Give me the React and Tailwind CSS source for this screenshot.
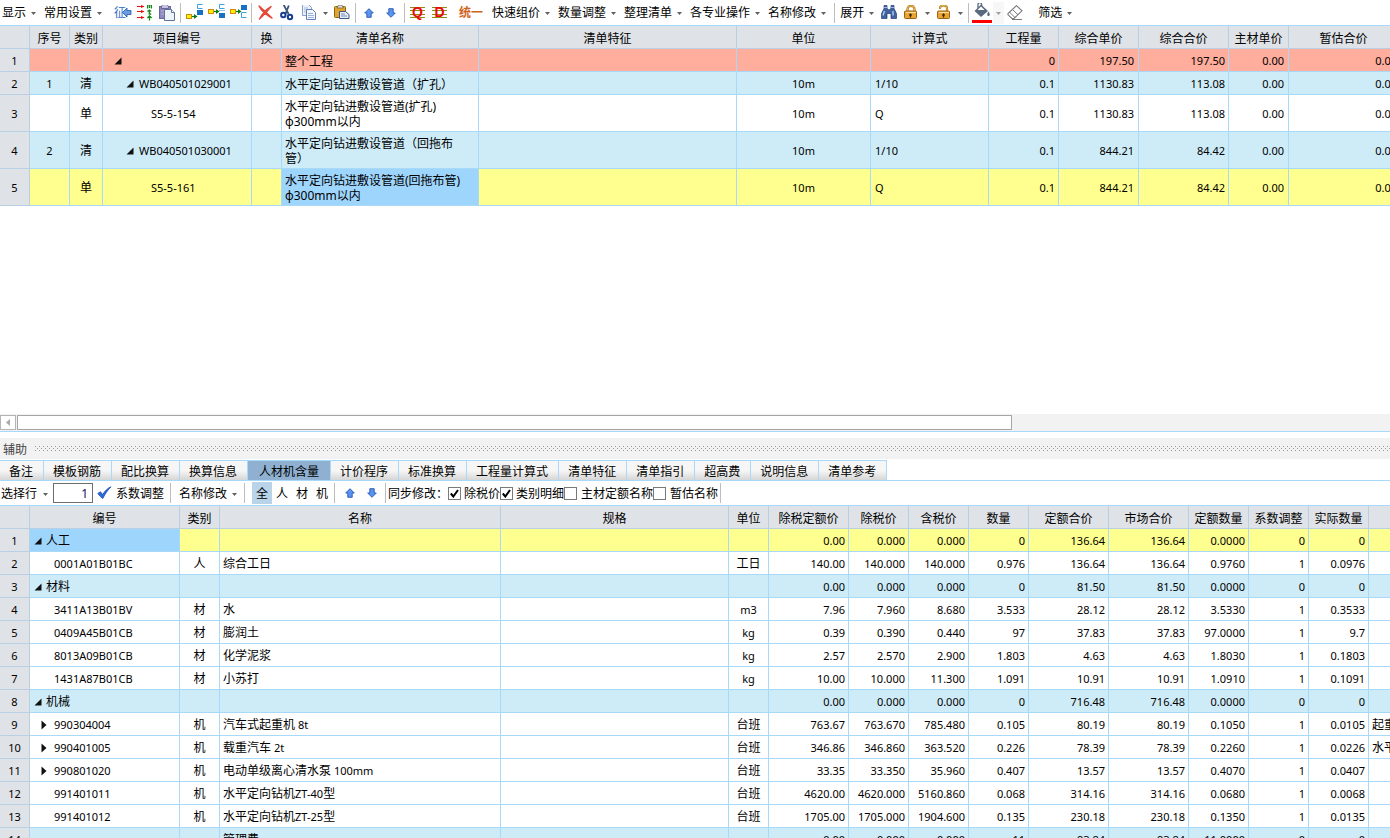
import React from 'react';
import clsx from 'clsx';

/* ---------- data ---------- */

const topColumns = [
  { label: '', width: 'w-[30px]' },
  { label: '序号', width: 'w-[40px]' },
  { label: '类别', width: 'w-[33px]' },
  { label: '项目编号', width: 'w-[149px]' },
  { label: '换', width: 'w-[30px]' },
  { label: '清单名称', width: 'w-[197px]' },
  { label: '清单特征', width: 'w-[258px]' },
  { label: '单位', width: 'w-[134px]' },
  { label: '计算式', width: 'w-[118px]' },
  { label: '工程量', width: 'w-[70px]' },
  { label: '综合单价', width: 'w-[80px]' },
  { label: '综合合价', width: 'w-[90px]' },
  { label: '主材单价', width: 'w-[60px]' },
  { label: '暂估合价', width: 'w-[110px]' },
];

const topRows = [
  { tone: 'total', seq: '', kind: '', code: '', level: 0, name: ['整个工程'], unit: '', formula: '', qty: '0', price: '197.50', total: '197.50' },
  { tone: 'group', seq: '1', kind: '清', code: 'WB040501029001', level: 1, name: ['水平定向钻进敷设管道（扩孔）'], unit: '10m', formula: '1/10', qty: '0.1', price: '1130.83', total: '113.08' },
  { tone: 'plain', seq: '', kind: '单', code: 'S5-5-154', level: 2, name: ['水平定向钻进敷设管道(扩孔)', 'φ300mm以内'], unit: '10m', formula: 'Q', qty: '0.1', price: '1130.83', total: '113.08' },
  { tone: 'group', seq: '2', kind: '清', code: 'WB040501030001', level: 1, name: ['水平定向钻进敷设管道（回拖布', '管）'], unit: '10m', formula: '1/10', qty: '0.1', price: '844.21', total: '84.42' },
  { tone: 'current', seq: '', kind: '单', code: 'S5-5-161', level: 2, name: ['水平定向钻进敷设管道(回拖布管)', 'φ300mm以内'], unit: '10m', formula: 'Q', qty: '0.1', price: '844.21', total: '84.42', selected: true },
];

const bottomColumns = [
  { label: '', width: 'w-[30px]' },
  { label: '编号', width: 'w-[150px]' },
  { label: '类别', width: 'w-[40px]' },
  { label: '名称', width: 'w-[281px]' },
  { label: '规格', width: 'w-[228px]' },
  { label: '单位', width: 'w-[40px]' },
  { label: '除税定额价', width: 'w-[80px]' },
  { label: '除税价', width: 'w-[60px]' },
  { label: '含税价', width: 'w-[60px]' },
  { label: '数量', width: 'w-[60px]' },
  { label: '定额合价', width: 'w-[80px]' },
  { label: '市场合价', width: 'w-[80px]' },
  { label: '定额数量', width: 'w-[60px]' },
  { label: '系数调整', width: 'w-[60px]' },
  { label: '实际数量', width: 'w-[60px]' },
  { label: '', width: 'w-[120px]' },
];

const bottomRows = [
  { tone: 'current', group: '人工', nums: ['0.00', '0.000', '0.000', '0', '136.64', '136.64', '0.0000', '0', '0'] },
  { code: '0001A01B01BC', kind: '人', name: '综合工日', unit: '工日', nums: ['140.00', '140.000', '140.000', '0.976', '136.64', '136.64', '0.9760', '1', '0.0976'] },
  { tone: 'group', group: '材料', nums: ['0.00', '0.000', '0.000', '0', '81.50', '81.50', '0.0000', '0', '0'] },
  { code: '3411A13B01BV', kind: '材', name: '水', unit: 'm3', nums: ['7.96', '7.960', '8.680', '3.533', '28.12', '28.12', '3.5330', '1', '0.3533'] },
  { code: '0409A45B01CB', kind: '材', name: '膨润土', unit: 'kg', nums: ['0.39', '0.390', '0.440', '97', '37.83', '37.83', '97.0000', '1', '9.7'] },
  { code: '8013A09B01CB', kind: '材', name: '化学泥浆', unit: 'kg', nums: ['2.57', '2.570', '2.900', '1.803', '4.63', '4.63', '1.8030', '1', '0.1803'] },
  { code: '1431A87B01CB', kind: '材', name: '小苏打', unit: 'kg', nums: ['10.00', '10.000', '11.300', '1.091', '10.91', '10.91', '1.0910', '1', '0.1091'] },
  { tone: 'group', group: '机械', nums: ['0.00', '0.000', '0.000', '0', '716.48', '716.48', '0.0000', '0', '0'] },
  { code: '990304004', closed: true, kind: '机', name: '汽车式起重机', spec: ' 8t', unit: '台班', nums: ['763.67', '763.670', '785.480', '0.105', '80.19', '80.19', '0.1050', '1', '0.0105'], note: '起重机械' },
  { code: '990401005', closed: true, kind: '机', name: '载重汽车', spec: ' 2t', unit: '台班', nums: ['346.86', '346.860', '363.520', '0.226', '78.39', '78.39', '0.2260', '1', '0.0226'], note: '水平运输' },
  { code: '990801020', closed: true, kind: '机', name: '电动单级离心清水泵', spec: ' 100mm', unit: '台班', nums: ['33.35', '33.350', '35.960', '0.407', '13.57', '13.57', '0.4070', '1', '0.0407'] },
  { code: '991401011', kind: '机', name: '水平定向钻机', spec: 'ZT-40', tail: '型', unit: '台班', nums: ['4620.00', '4620.000', '5160.860', '0.068', '314.16', '314.16', '0.0680', '1', '0.0068'] },
  { code: '991401012', kind: '机', name: '水平定向钻机', spec: 'ZT-25', tail: '型', unit: '台班', nums: ['1705.00', '1705.000', '1904.600', '0.135', '230.18', '230.18', '0.1350', '1', '0.0135'] },
  { tone: 'group', name: '管理费', nums: ['0.00', '0.000', '0.000', '11', '93.84', '93.84', '11.0000', '0', '0'] },
];

const tabs = ['备注', '模板钢筋', '配比换算', '换算信息', '人材机含量', '计价程序', '标准换算', '工程量计算式', '清单特征', '清单指引', '超高费', '说明信息', '清单参考'];

const tones = {
  total: 'bg-[#ffad9c]',
  group: 'bg-[#ceecf8]',
  plain: 'bg-white',
  current: 'bg-[#ffff8f]',
};

/* ---------- icons ---------- */

const Icon = ({ children, className }) => (
  <svg width="16" height="16" viewBox="0 0 16 16" className={clsx('shrink-0', className)} aria-hidden="true">
    {children}
  </svg>
);

const FeatureIcon = () => (
  <svg width="18" height="16" viewBox="0 0 18 16" className="shrink-0 overflow-visible" aria-hidden="true">
    <text x="0" y="12" fontSize="12" fill="#2f6fc4" fontFamily="Noto Sans CJK SC, sans-serif">征</text>
    <path d="M8.500 7.500L13 3V5.500H17V9.500H13V12Z" fill="#6c9be6" stroke="#2456a8" strokeWidth=".8" />
  </svg>
);

const UnitIcon = () => (
  <Icon>
    <g fill="#e81010">
      <path d="M0 1h7v1H0zM0 6h7v1H0zM0 12h7v1H0z" />
      <path d="M4 0L7.500 1.500L4 3zM4 5L7.500 6.500L4 8zM4 11L7.500 12.500L4 14z" />
    </g>
    <g stroke="#158a1c" strokeWidth="1.300" fill="none">
      <path d="M10.600 3.500V-.4H14.400V3.500M12.500 -.4V3" />
      <path d="M12.300 4.500V9H14.200M10.400 6H14.200" />
      <path d="M12.500 10.500V15.500M10.400 13L12.500 11L14.600 13" />
    </g>
  </Icon>
);

const ClipIcon = () => (
  <Icon>
    <rect x="0.500" y="1.500" width="11" height="12" fill="#8f88bf" stroke="#6c64a4" />
    <path d="M2.500 1.500L3.500 -.5h4.500l1.500 2v2h-7z" fill="#c7c2dd" stroke="#5c5686" strokeWidth=".8" />
    <path d="M2 6h3M2 9h3" stroke="#b9b4dc" />
    <path d="M5.500 4.500h7l3 3v8h-10z" fill="#eef2f9" stroke="#5f7396" />
    <path d="M12.500 4.500v3h3" fill="#fff" stroke="#5f7396" />
  </Icon>
);

const sourceTop = { child: 10, between: 5, before: 5 };

const NodeIcon = ({ mode }) => {
  const y = sourceTop[mode];
  return (
    <Icon className="overflow-visible">
      <rect x="0.500" y={y - 0.500} width="5" height="4" fill="#ffee00" stroke="#d08a18" />
      <path d={`M6 ${y + 1.500}H9`} stroke="#0b7a13" strokeWidth="1.200" />
      <path d={`M8 ${y - 1}L11.500 ${y + 1.500}L8 ${y + 4}Z`} fill="#0b7a13" />
      {mode === 'child' && (
        <>
          <path d="M16.500 -.5H11.500V3.500H16.500" fill="none" stroke="#3da2e4" />
          <rect x="11" y="5" width="6" height="5" fill="#1670c4" />
        </>
      )}
      {mode === 'between' && (
        <>
          <path d="M16.500 -.5H11.500V3.500H16.500" fill="none" stroke="#3da2e4" />
          <rect x="11" y="5" width="6" height="1" fill="#8cc7ee" />
          <rect x="11" y="8" width="6" height="5" fill="#1670c4" />
        </>
      )}
      {mode === 'before' && (
        <>
          <rect x="11" y="0" width="6" height="5" fill="#1670c4" />
          <path d="M16.500 7.500H11.500V12.500H16.500" fill="none" stroke="#3da2e4" />
        </>
      )}
    </Icon>
  );
};

const DeleteIcon = () => (
  <Icon>
    <path d="M2 1C6 4 10 8.500 15 13C10 10.500 5 7 2 1ZM14 1.500C9 4.500 5 9 2.500 14C7 10 10 7 14 1.500Z" fill="#ef5a43" stroke="#e34a38" strokeWidth="1.400" strokeLinejoin="round" />
  </Icon>
);

const CutIcon = () => (
  <Icon>
    <path d="M4.500 -.5L9.600 9M9.800 .5L6.500 9" stroke="#3c5878" strokeWidth="1.800" fill="none" />
    <circle cx="4.300" cy="10" r="2.200" fill="none" stroke="#173e91" strokeWidth="2" />
    <circle cx="11" cy="12" r="2.200" fill="none" stroke="#173e91" strokeWidth="2" />
  </Icon>
);

const CopyIcon = () => (
  <Icon>
    <path d="M1.500 -.5h6l3 3v8h-9z" fill="#eaf1fb" stroke="#8ba0ca" />
    <path d="M3 3h4M3 5h4M3 7h3" stroke="#a9bbdd" />
    <path d="M5.500 4.500h6l3 3v7h-9z" fill="#f3f7fd" stroke="#6280b8" />
    <path d="M7 8.500h5M7 10.500h6M7 12.500h6" stroke="#9db2d8" />
  </Icon>
);

const PasteIcon = () => (
  <Icon>
    <rect x="0.500" y="1.500" width="11" height="11" rx="1" fill="#dfa42c" stroke="#93620f" />
    <path d="M3 3L4.500 .2h3.500L9.500 3z" fill="#e8e2d2" stroke="#6c6450" strokeWidth=".8" />
    <path d="M5.500 6.500h6l3.500 3v4h-9.500z" fill="#e6eefa" stroke="#40557f" />
    <path d="M7 9h4M7 11h6" stroke="#7289b5" />
  </Icon>
);

const ArrowIcon = ({ down }) => (
  <svg width="10" height="10" viewBox="0 0 10 10" className={clsx('shrink-0', down && 'rotate-180')} aria-hidden="true">
    <path d="M5 .7L9.300 5H7.200V9.300H2.800V5H.7Z" fill="#5b94f0" stroke="#2455b4" strokeWidth=".9" />
  </svg>
);

const LetterIcon = ({ letter }) => (
  <Icon className="overflow-visible">
    <path d="M0 2.500H15M0 5.500H15M0 9.500H15M0 12.500H15" stroke="#8d8d10" />
    <text x="7.500" y="12" fontSize="14" fontWeight="700" textAnchor="middle" fill="#f00606" fontFamily="Liberation Sans, sans-serif">{letter}</text>
  </Icon>
);

const FindIcon = () => (
  <Icon>
    <path d="M3 .5h3v3l1.500 1v3h1v-3L10 3.500V.5h3v3l2.500 5v5h-5.500V8.500h-4v5H.5v-5L3 3.500z" fill="#3f62a0" stroke="#233f78" strokeWidth=".7" />
    <path d="M3.500 6L2 10.500M12 6L12 10.500" stroke="#b5cbee" strokeWidth="1.400" />
    <path d="M3 2.500h3M10 2.500h3" stroke="#9db8e2" />
  </Icon>
);

const LockIcon = ({ open }) => (
  <Icon>
    <path d={open ? 'M4 4V3a3.500 2.600 0 0 1 7 0V7' : 'M4.500 7V4a3.500 3.200 0 0 1 7 0V7'} fill="none" stroke="#b5730f" strokeWidth="2.200" />
    <path d={open ? 'M4 4V3a3.500 2.600 0 0 1 7 0V7' : 'M4.500 7V4a3.500 3.200 0 0 1 7 0V7'} fill="none" stroke="#f3cd6e" strokeWidth=".8" />
    <rect x="1.500" y="6" width="12" height="7.500" rx="1" fill="#e8a531" stroke="#9c6211" />
    <path d="M3 7.500h10" stroke="#fbe0a0" />
    <path d="M7.500 8.500v4M6.200 10h2.600" stroke="#3a2603" strokeWidth="1.300" />
  </Icon>
);

const FillIcon = () => (
  <svg width="20" height="20" viewBox="0 0 20 20" className="shrink-0" aria-hidden="true">
    <path d="M6 5V1.500a1.800 1.800 0 0 1 3.600 0V6" fill="none" stroke="#5a6b80" strokeWidth="1.300" />
    <path d="M9 1.500L16 8L9 14L2.500 8Z" fill="#5a6b80" />
    <path d="M9 3.500L12.500 7H5.500Z" fill="#fff" />
    <path d="M16.500 8.500c1.500 2 1.800 4.500 0 4.500s-1.500-2.500 0-4.500z" fill="#5a6b80" />
    <rect x="0" y="17" width="20" height="3" fill="#ff0000" />
  </svg>
);

const EraserIcon = () => (
  <Icon>
    <path d="M9.500 .6L15 5.800L7 13.500H5L1 9.800V8.600Z" fill="#fff" stroke="#77797d" strokeWidth="1.100" />
    <path d="M5.500 4.500L11 9.800M2.600 7.200L8 12.500" stroke="#77797d" />
    <path d="M5 14.500H15" stroke="#77797d" />
  </Icon>
);

const CheckIcon = () => (
  <svg width="15" height="14" viewBox="0 0 15 14" className="shrink-0" aria-hidden="true">
    <path d="M.8 7.500L3.500 5.800L5.500 8.500C8 5 10.500 2.200 14 .8C10.800 4 8 8 5.800 12.500Q3.500 11 .8 7.500Z" fill="#2c6be0" stroke="#1a48ad" strokeWidth=".8" />
  </svg>
);

const Caret = () => (
  <svg width="5" height="3" viewBox="0 0 5 3" className="shrink-0 text-[#606060]" aria-hidden="true">
    <path d="M0 0H5L2.500 3Z" fill="currentColor" />
  </svg>
);

const OpenNode = () => (
  <svg width="8" height="8" viewBox="0 0 8 8" className="shrink-0" aria-hidden="true">
    <path d="M7.500 .5V7.500H.5Z" fill="#111" />
  </svg>
);

const ClosedNode = () => (
  <svg width="6" height="10" viewBox="0 0 6 10" className="shrink-0" aria-hidden="true">
    <path d="M.5 .5L5.500 5L.5 9.500Z" fill="#111" />
  </svg>
);

/* ---------- toolbar pieces ---------- */

const MenuButton = ({ children, className = 'pr-2' }) => (
  <button type="button" className={clsx('flex shrink-0 items-center gap-[5px]', className)}>
    {children}
    <Caret />
  </button>
);

const IconButton = ({ label, children }) => (
  <button type="button" aria-label={label} className="flex h-[22px] w-[22px] shrink-0 items-center justify-center">
    {children}
  </button>
);

const CaretButton = ({ label, className }) => (
  <button type="button" aria-label={label} className={clsx('flex h-[22px] w-[11px] shrink-0 items-center justify-center', className)}>
    <Caret />
  </button>
);

const Separator = ({ className = 'mx-[2px]' }) => <div className={clsx('h-5 w-px shrink-0 bg-[#bdbdbd]', className)} />;

const MainToolbar = () => (
  <div className="flex h-[25px] shrink-0 items-center overflow-hidden pt-px pl-[2px] whitespace-nowrap">
    <MenuButton>显示</MenuButton>
    <MenuButton>常用设置</MenuButton>
    <div className="flex items-center pl-[2px]">
      <IconButton label="项目特征"><FeatureIcon /></IconButton>
      <IconButton label="单位换算"><UnitIcon /></IconButton>
      <IconButton label="粘贴清单"><ClipIcon /></IconButton>
    </div>
    <Separator />
    <IconButton label="插入子项"><NodeIcon mode="child" /></IconButton>
    <IconButton label="插入项"><NodeIcon mode="between" /></IconButton>
    <IconButton label="向前插入"><NodeIcon mode="before" /></IconButton>
    <Separator />
    <IconButton label="删除"><DeleteIcon /></IconButton>
    <IconButton label="剪切"><CutIcon /></IconButton>
    <IconButton label="复制"><CopyIcon /></IconButton>
    <CaretButton label="复制选项" />
    <IconButton label="粘贴"><PasteIcon /></IconButton>
    <Separator />
    <IconButton label="上移"><ArrowIcon /></IconButton>
    <IconButton label="下移"><ArrowIcon down /></IconButton>
    <Separator />
    <IconButton label="清单"><LetterIcon letter="Q" /></IconButton>
    <IconButton label="定额"><LetterIcon letter="D" /></IconButton>
    <button type="button" className="mr-[9px] ml-2 font-bold text-[#cf6420]">统一</button>
    <MenuButton>快速组价</MenuButton>
    <MenuButton>数量调整</MenuButton>
    <MenuButton>整理清单</MenuButton>
    <MenuButton>各专业操作</MenuButton>
    <MenuButton>名称修改</MenuButton>
    <Separator className="mr-[5px]" />
    <MenuButton className="pr-1">展开</MenuButton>
    <IconButton label="查找"><FindIcon /></IconButton>
    <IconButton label="锁定"><LockIcon /></IconButton>
    <CaretButton label="锁定选项" />
    <IconButton label="解锁"><LockIcon open /></IconButton>
    <CaretButton label="解锁选项" />
    <Separator />
    <IconButton label="填充颜色"><FillIcon /></IconButton>
    <CaretButton label="颜色选项" className="bg-[#f3f3f3] opacity-60" />
    <IconButton label="清除颜色"><EraserIcon /></IconButton>
    <div className="pl-3">
      <MenuButton>筛选</MenuButton>
    </div>
  </div>
);

const CheckOption = ({ label, checked }) => (
  <label className="flex shrink-0 items-center gap-1">
    <input
      type="checkbox"
      defaultChecked={checked}
      className="peer h-[13px] w-[13px] appearance-none border border-[#7a7a7a] bg-white"
    />
    <svg width="9" height="9" viewBox="0 0 9 9" className="-ml-[15px] hidden shrink-0 peer-checked:block" aria-hidden="true">
      <path d="M.8 4.500L3.300 7.500L8 1" fill="none" stroke="#000" strokeWidth="2" />
    </svg>
    <span className="pt-[2px] peer-checked:ml-px">{label}</span>
  </label>
);

const DetailToolbar = () => (
  <div className="flex h-6 shrink-0 items-center overflow-hidden pl-px whitespace-nowrap">
    <button type="button" className="flex shrink-0 items-center gap-[6px] pt-[2px]">选择行<Caret /></button>
    <input
      type="text"
      aria-label="行号"
      defaultValue="1"
      className="ml-[5px] h-5 w-10 border border-[#6e6e6e] bg-white pr-1 text-right text-[#101060]"
    />
    <button type="button" className="ml-1 flex shrink-0 items-center gap-1">
      <CheckIcon />
      <span className="pt-[2px]">系数调整</span>
    </button>
    <Separator className="mr-2 ml-[6px]" />
    <MenuButton className="pt-[2px] pr-[7px]">名称修改</MenuButton>
    <Separator className="mr-[7px]" />
    <div className="flex">
      {['全', '人', '材', '机'].map((kind, i) => (
        <button key={kind} type="button" className={clsx('h-[22px] w-5 pt-[2px]', i === 0 && 'bg-[#b9d3e9]')}>{kind}</button>
      ))}
    </div>
    <Separator className="mr-1 ml-[2px]" />
    <IconButton label="上移"><ArrowIcon /></IconButton>
    <IconButton label="下移"><ArrowIcon down /></IconButton>
    <Separator />
    <span className="shrink-0 pt-[2px]">同步修改：</span>
    <CheckOption label="除税价" checked />
    <CheckOption label="类别明细" checked />
    <CheckOption label="主材定额名称" />
    <CheckOption label="暂估名称" />
    <Separator />
  </div>
);

/* ---------- grids ---------- */

const numFont = 'text-[11px]';

const Cell = ({ className, children }) => (
  <td className={clsx('overflow-hidden border-r border-b border-[#a9d9f9] pt-[2px] whitespace-nowrap', className)}>{children}</td>
);

const RowNumber = ({ children }) => (
  <th scope="row" className={clsx('border-r border-b border-[#b9cfe3] bg-[#dfe2e7] pt-px text-center font-normal', numFont)}>{children}</th>
);

const GridHead = ({ columns }) => (
  <thead>
    <tr className="h-6">
      {columns.map((col, i) => (
        <th
          key={i}
          scope="col"
          className={clsx('border-t border-r border-b border-t-[#a9d9f9] border-r-[#b9cfe3] border-b-[#b9cfe3] bg-[#dfe2e7] pt-1 text-center font-normal whitespace-nowrap', col.width)}
        >
          {col.label}
        </th>
      ))}
    </tr>
  </thead>
);

const codeIndent = ['pl-[11px]', 'pl-[23px]', 'pl-12'];

const BillGrid = () => (
  <table className="w-[1399px] table-fixed border-separate border-spacing-0">
    <GridHead columns={topColumns} />
    <tbody>
      {topRows.map((row, i) => (
        <tr key={i} className={clsx(tones[row.tone], row.name.length > 1 ? 'h-[37px]' : 'h-[23px]')}>
          <RowNumber>{i + 1}</RowNumber>
          <Cell className={clsx('text-center', numFont)}>{row.seq}</Cell>
          <Cell className="text-center">{row.kind}</Cell>
          <Cell className={numFont}>
            <div className={clsx('flex items-center gap-[5px]', codeIndent[row.level])}>
              {row.level < 2 && <OpenNode />}
              <span>{row.code}</span>
            </div>
          </Cell>
          <Cell />
          <Cell className={clsx('pl-[3px] leading-[15px]', row.selected && 'bg-[#9ed5fd]')}>
            {row.name.map((line) => <div key={line}>{line}</div>)}
          </Cell>
          <Cell />
          <Cell className={clsx('text-center', numFont)}>{row.unit}</Cell>
          <Cell className={clsx('pl-1', numFont)}>{row.formula}</Cell>
          <Cell className={clsx('pr-[3px] text-right', numFont)}>{row.qty}</Cell>
          <Cell className={clsx('pr-1 text-right', numFont)}>{row.price}</Cell>
          <Cell className={clsx('pr-[3px] text-right', numFont)}>{row.total}</Cell>
          <Cell className={clsx('pr-1 text-right', numFont)}>0.00</Cell>
          <Cell className={clsx('pr-px text-right', numFont)}>0.00</Cell>
        </tr>
      ))}
    </tbody>
  </table>
);

const ResourceGrid = () => (
  <table className="w-[1489px] table-fixed border-separate border-spacing-0">
    <GridHead columns={bottomColumns} />
    <tbody>
      {bottomRows.map((row, i) => (
        <tr key={i} className={clsx('h-[23px]', tones[row.tone || 'plain'])}>
          <RowNumber>{i + 1}</RowNumber>
          {row.group ? (
            <Cell className={clsx(row.tone === 'current' && 'bg-[#9ed5fd]')}>
              <div className="flex items-center gap-1 pl-1"><OpenNode />{row.group}</div>
            </Cell>
          ) : (
            <Cell className={numFont}>
              <div className={clsx('flex items-center gap-[7px]', row.closed ? 'pl-[11px]' : 'pl-6')}>
                {row.closed && <ClosedNode />}
                <span>{row.code}</span>
              </div>
            </Cell>
          )}
          <Cell className="text-center">{row.kind}</Cell>
          <Cell className="pl-[3px]">
            <span className="whitespace-pre">
              {row.name}
              <span className={numFont}>{row.spec}</span>
              {row.tail}
            </span>
          </Cell>
          <Cell />
          <Cell className={clsx('text-center', /^[a-z]/.test(row.unit) && numFont)}>{row.unit}</Cell>
          {row.nums.map((num, n) => (
            <Cell key={n} className={clsx('pr-[3px] text-right', numFont)}>{num}</Cell>
          ))}
          <Cell className="pl-[3px]">{row.note}</Cell>
        </tr>
      ))}
    </tbody>
  </table>
);

const DotGrip = () => (
  <svg width="100%" height="5" className="min-w-0 flex-1" aria-hidden="true">
    <defs>
      <pattern id="grip" width="4" height="4" patternUnits="userSpaceOnUse">
        <rect x="0" y="0" width="1" height="1" fill="#9a9a9a" />
        <rect x="2" y="2" width="1" height="1" fill="#9a9a9a" />
      </pattern>
    </defs>
    <rect width="100%" height="5" fill="url(#grip)" />
  </svg>
);

const App = () => (
  <div className="flex h-screen flex-col overflow-hidden bg-white font-['Noto_Sans','Noto_Sans_CJK_SC',sans-serif] text-[12px] leading-4 text-black">
    <MainToolbar />

    <div className="h-[389px] shrink-0 overflow-hidden">
      <BillGrid />
    </div>

    {/* Horizontal scroll bar of the bill grid */}
    <div className="flex h-[18px] shrink-0 items-center gap-px border-b border-[#a9d9f9] bg-[#f2f2f2]">
      <button type="button" aria-label="向左滚动" className="flex h-[15px] w-4 items-center justify-center border border-[#b4b4b4] bg-white">
        <svg width="4" height="7" viewBox="0 0 4 7" aria-hidden="true"><path d="M4 0V7L0 3.500Z" fill="#a8a8a8" /></svg>
      </button>
      <div className="h-[15px] w-[995px] border border-[#a6a6a6] bg-white" />
    </div>

    <div className="mt-[6px] mb-px flex h-[21px] shrink-0 items-center gap-2 bg-[#f2f2f2] pl-[3px] text-[#444]">
      <span className="pt-[2px]">辅助</span>
      <DotGrip />
    </div>

    <div className="flex h-[21px] shrink-0 border-b border-[#a9d9f9]">
      {tabs.map((tab) => (
        <button
          key={tab}
          type="button"
          className={clsx(
            'shrink-0 border-t border-r border-[#a9d9f9] pt-[2px] whitespace-nowrap',
            tab === '人材机含量'
              ? 'bg-[#8fb0d1] pr-[11px] pl-[11px]'
              : 'bg-linear-to-b from-[#f6f6f6] from-50% to-[#d6d6d6] pr-[10px] pl-[9px]'
          )}
        >
          {tab}
        </button>
      ))}
    </div>

    <DetailToolbar />

    <div className="min-h-0 flex-1 overflow-hidden">
      <ResourceGrid />
    </div>
  </div>
);

export default App;
